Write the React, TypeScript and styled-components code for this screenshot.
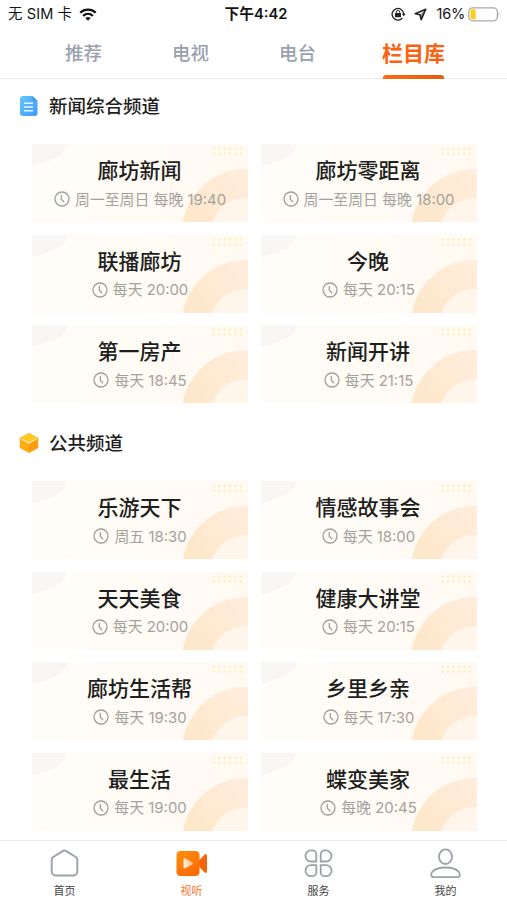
import React from 'react';
import styled, { createGlobalStyle } from 'styled-components';

const GlobalStyle = createGlobalStyle`
  * { box-sizing: border-box; }
  body {
    margin: 0;
    background: #fff;
    color: #1e1e20;
    font-family: Inter, "Noto Sans CJK SC", sans-serif;
  }
`;

const Screen = styled.div`
  width: 507px;
  height: 900px;
  display: flex;
  flex-direction: column;
  overflow: hidden;
  background: #fff;
`;

const StatusBar = styled.header`
  height: 28px;
  flex: none;
  display: grid;
  grid-template-columns: 1fr auto 1fr;
  align-items: center;
  padding: 0 6px 0 8px;
  font-size: 14.5px;
  line-height: 28px;
  white-space: nowrap;
  color: #141414;
`;

const StatusGroup = styled.div<{ $end?: boolean }>`
  display: flex;
  align-items: center;
  justify-content: ${p => (p.$end ? 'flex-end' : 'flex-start')};
  height: 28px;
`;

const Carrier = styled.span`
  margin-right: 7px;
  letter-spacing: 0.1px;
`;

const Clock = styled.span`
  padding-left: 3px;
  font-weight: 600;
  font-size: 14.7px;
`;

const Percent = styled.span`
  margin: 0 3px 0 9px;
  letter-spacing: -0.2px;
`;

const Tabs = styled.nav`
  height: 51px;
  flex: none;
  display: grid;
  grid-template-columns: 107px 107px 107px 125px;
  padding-left: 30px;
  border-bottom: 1px solid #e9e9ea;
`;

const Tab = styled.div<{ $active?: boolean }>`
  display: flex;
  flex-direction: column;
  align-items: center;
  justify-content: space-between;
  height: 51px;
  font-size: ${p => (p.$active ? 21 : 18.5)}px;
  font-weight: ${p => (p.$active ? 700 : 500)};
  line-height: 47px;
  color: ${p => (p.$active ? '#fb620f' : '#9aa1ae')};
`;

const TabText = styled.span`
  height: 47px;
  padding-top: 2px;
`;

const Underline = styled.i`
  width: 61px;
  height: 4px;
  border-radius: 3px 3px 0 0;
  background: linear-gradient(90deg, #fb6a14, #e85c10);
`;

const Content = styled.main`
  flex: 1;
  min-height: 0;
  overflow: hidden;
`;

const Section = styled.section`
  height: 337px;
`;

const SectionTitle = styled.h2`
  display: flex;
  align-items: center;
  gap: 10px;
  height: 54px;
  margin: 0 0 11px;
  padding-left: 19px;
  font-size: 18.5px;
  font-weight: 500;
  line-height: 54px;
`;

const Cards = styled.div`
  display: grid;
  grid-template-columns: 216px 216px;
  grid-auto-rows: 78px;
  gap: 12.5px;
  padding-left: 32px;
`;

const Card = styled.article`
  position: relative;
  display: flex;
  flex-direction: column;
  align-items: center;
  padding: 11px 1px 0 0;
  background: linear-gradient(100deg, #fffdf9, #fffbf4 65%, #fff9f1);
  overflow: hidden;
`;

const Decoration = styled.svg`
  position: absolute;
  inset: 0;
`;

const CardTitle = styled.h3`
  position: relative;
  margin: 0;
  font-size: 21px;
  font-weight: 500;
  line-height: 31px;
`;

const Schedule = styled.div`
  position: relative;
  display: flex;
  align-items: center;
  gap: 5px;
  height: 27px;
  padding-left: 1px;
  font-size: 14.9px;
  line-height: 28px;
  color: #a4a19d;
  white-space: nowrap;
  svg { margin-bottom: 1px; }
`;

const BottomBar = styled.nav`
  height: 60px;
  flex: none;
  display: grid;
  grid-template-columns: repeat(4, 127px);
  padding-left: 1px;
  border-top: 1px solid #ebebec;
  background: #fff;
`;

const BottomItem = styled.div<{ $active?: boolean }>`
  display: flex;
  flex-direction: column;
  align-items: center;
  padding-top: 7px;
  font-size: 11px;
  line-height: 16px;
  color: ${p => (p.$active ? '#f5732d' : '#444')};
  svg { margin-bottom: 4px; }
`;

const CardArt = () => (
  <Decoration width="217" height="78" viewBox="0 0 217 78">
    <path d="M0 0H36C32 12 22 15 14 18C9 20 5 21 0 22Z" fill="#f8f7f5" />
    <circle cx="214" cy="89" r="35" fill="#fff5eb" />
    <circle cx="214" cy="89" r="49.5" fill="none" stroke="url(#ringFill)" strokeWidth="29" />
    {[4.7, 9.7].map(y =>
      [0, 1, 2, 3, 4, 5].map(i => (
        <circle key={`${y}-${i}`} cx={181.8 + i * 5.4} cy={y} r="1.15" fill="#fbeeb0" />
      )),
    )}
  </Decoration>
);

const SharedGradients = styled.svg`
  position: absolute;
  width: 0;
  height: 0;
`;

const ClockIcon = () => (
  <svg width="16" height="16" viewBox="0 0 16 16" fill="none" stroke="#a09f9d" strokeWidth="1.3" strokeLinecap="round">
    <circle cx="8" cy="8" r="7" />
    <path d="M7.3 4.3V8.2L9.7 10.8" />
  </svg>
);

const WifiIcon = () => (
  <svg width="18" height="13" viewBox="0 0 18 13" fill="none" stroke="#111" strokeWidth="2.3">
    <path d="M1.2 4.7C5.5.5 12.5.5 16.8 4.7" />
    <path d="M4.2 7.8C7 5.2 11 5.2 13.8 7.8" />
    <path d="M9 12.7L6.3 10Q9 7.8 11.7 10Z" fill="#111" stroke="none" />
  </svg>
);

const LockIcon = () => (
  <svg width="15" height="14" viewBox="0 0 15 14" fill="none" stroke="#222" strokeWidth="1.3">
    <path d="M11.5 10.8A5.8 5.8 0 1 1 12.7 7" />
    <path d="M10.7 6.7H14.7L12.7 9.2Z" fill="#222" stroke="none" />
    <rect x="4" y="6.1" width="6" height="4.2" rx=".6" fill="#222" stroke="none" />
    <path d="M5.2 6.5V5.3a1.8 1.8 0 0 1 3.6 0v1.2" strokeWidth="1" />
  </svg>
);

const LocationMark = styled.svg`
  margin-left: 8px;
`;

const LocationIcon = () => (
  <LocationMark width="13" height="13" viewBox="0 0 13 13" fill="none" stroke="#222" strokeWidth="1.6" strokeLinejoin="round">
    <path d="M11.7 1.2L1.2 5.8L6 6.8L7.2 11.8Z" />
    <path d="M11.7 1.2L6 6.8L7.2 11.8Z" fill="#222" fillOpacity=".5" stroke="none" />
  </LocationMark>
);

const BatteryIcon = () => (
  <svg width="33" height="15" viewBox="0 0 33 15">
    <rect x=".8" y=".8" width="28.6" height="13" rx="4" fill="#fff" stroke="#a9a9a9" strokeWidth="1.2" />
    <path d="M4.5 2.3H7.6V12.3H4.5a2 2 0 0 1-2-2V4.3a2 2 0 0 1 2-2Z" fill="#fdce12" />
    <path d="M30.7 5.1Q32.5 7.3 30.7 9.5Z" fill="#9c9c9c" />
  </svg>
);

const DocumentIcon = () => (
  <svg width="20" height="20" viewBox="0 0 20 20">
    <defs>
      <linearGradient id="docFill" x1="0" y1="0" x2="1" y2="1">
        <stop stopColor="#65c8fb" />
        <stop offset="1" stopColor="#4198f8" />
      </linearGradient>
    </defs>
    <path d="M4 0H13.5L18.5 5V17a3 3 0 0 1-3 3H4a3 3 0 0 1-3-3V3a3 3 0 0 1 3-3Z" fill="url(#docFill)" />
    <path d="M13.5 0L18.5 5H15a1.5 1.5 0 0 1-1.5-1.5Z" fill="#3c9af0" />
    <path d="M5 7.2H14M5 11H14M5 14.8H14" stroke="#e3f5ff" strokeWidth="1.4" />
  </svg>
);

const CubeIcon = () => (
  <svg width="20" height="20" viewBox="0 0 20 20">
    <path d="M10 .5L18.8 5.2V14.7L10 19.5L1.2 14.7V5.2Z" fill="#ffac13" stroke="#ffac13" strokeLinejoin="round" />
    <path d="M10 .5L18.8 5.2L10 10L1.2 5.2Z" fill="#ffc91d" />
    <path d="M10 10L18.8 5.2V14.7L10 19.5Z" fill="#ff9b0d" />
    <path d="M2.5 6L10 10L17.5 6" fill="none" stroke="#fff0bd" strokeWidth="1.4" />
  </svg>
);

const HomeIcon = () => (
  <svg width="31" height="31" viewBox="0 0 31 31" fill="none" stroke="#9da1ac" strokeWidth="1.9" strokeLinejoin="round">
    <path d="M14.1 2.9Q15.5 2 16.9 2.9L26.8 9Q28.3 10 28.3 12V23.5a4 4 0 0 1-4 4H6.7a4 4 0 0 1-4-4V12Q2.7 10 4.2 9Z" />
  </svg>
);

const VideoIcon = () => (
  <svg width="33" height="31" viewBox="0 0 33 31">
    <defs>
      <linearGradient id="videoFill" x1="0" y1="0" x2=".6" y2="1">
        <stop stopColor="#ff9208" />
        <stop offset="1" stopColor="#fc6a06" />
      </linearGradient>
      <linearGradient id="playFill">
        <stop stopColor="#fff0df" />
        <stop offset="1" stopColor="#ffc08a" />
      </linearGradient>
    </defs>
    <path d="M23.5 13L29.2 7Q32 4.6 32 8V23Q32 26.4 29.2 24L23.5 18Z" fill="#f7630b" />
    <rect x="1.5" y="3" width="23" height="25" rx="4" fill="url(#videoFill)" />
    <path d="M8.5 11.5Q8.5 9.8 10.3 10.6L17.3 14.4Q18.8 15.5 17.3 16.6L10.3 20.2Q8.5 20.8 8.5 19.3Z" fill="url(#playFill)" />
  </svg>
);

const ServiceIcon = () => (
  <svg width="31" height="31" viewBox="0 0 31 31" fill="none" stroke="#9da1a8" strokeWidth="1.8">
    <path d="M8 2.4H9.3a4 4 0 0 1 4 4V13.5H8A5.5 5.5 0 0 1 8 2.4Z" />
    <path d="M23 2.4H21.7a4 4 0 0 0-4 4V13.5H23A5.5 5.5 0 0 0 23 2.4Z" />
    <path d="M8 28.2H9.3a4 4 0 0 0 4-4V17.1H8A5.5 5.5 0 0 0 8 28.2Z" />
    <path d="M23 28.2H21.7a4 4 0 0 1-4-4V17.1H23A5.5 5.5 0 0 1 23 28.2Z" />
  </svg>
);

const UserIcon = () => (
  <svg width="31" height="31" viewBox="0 0 31 31" fill="none" stroke="#9da1a8" strokeWidth="1.8">
    <ellipse cx="15.5" cy="8.7" rx="6.5" ry="7.3" />
    <path d="M4 29.2C.8 29.2.5 26 2.3 23.8C4.9 20.8 10 19.5 15.5 19.5S26.1 20.8 28.7 23.8C30.5 26 30.2 29.2 27 29.2Z" />
  </svg>
);

const channels = [
  {
    name: '新闻综合频道',
    icon: <DocumentIcon />,
    shows: [
      ['廊坊新闻', '周一至周日 每晚 19:40'],
      ['廊坊零距离', '周一至周日 每晚 18:00'],
      ['联播廊坊', '每天 20:00'],
      ['今晚', '每天 20:15'],
      ['第一房产', '每天 18:45'],
      ['新闻开讲', '每天 21:15'],
    ],
  },
  {
    name: '公共频道',
    icon: <CubeIcon />,
    shows: [
      ['乐游天下', '周五 18:30'],
      ['情感故事会', '每天 18:00'],
      ['天天美食', '每天 20:00'],
      ['健康大讲堂', '每天 20:15'],
      ['廊坊生活帮', '每天 19:30'],
      ['乡里乡亲', '每天 17:30'],
      ['最生活', '每天 19:00'],
      ['蝶变美家', '每晚 20:45'],
    ],
  },
];

export default function App() {
  return (
    <>
      <GlobalStyle />
      <Screen>
        <SharedGradients aria-hidden="true">
          <defs>
            <linearGradient id="ringFill" gradientUnits="userSpaceOnUse" x1="150" y1="78" x2="217" y2="25">
              <stop stopColor="#fee7c8" />
              <stop offset="1" stopColor="#ffeddd" />
            </linearGradient>
          </defs>
        </SharedGradients>
        <StatusBar>
          <StatusGroup>
            <Carrier>无 SIM 卡</Carrier>
            <WifiIcon />
          </StatusGroup>
          <Clock>下午4:42</Clock>
          <StatusGroup $end>
            <LockIcon />
            <LocationIcon />
            <Percent>16%</Percent>
            <BatteryIcon />
          </StatusGroup>
        </StatusBar>
        <Tabs>
          {['推荐', '电视', '电台'].map(t => (
            <Tab key={t}><TabText>{t}</TabText></Tab>
          ))}
          <Tab $active>
            <TabText>栏目库</TabText>
            <Underline />
          </Tab>
        </Tabs>
        <Content>
          {channels.map(channel => (
            <Section key={channel.name}>
              <SectionTitle>{channel.icon}{channel.name}</SectionTitle>
              <Cards>
                {channel.shows.map(([title, time]) => (
                  <Card key={title}>
                    <CardArt />
                    <CardTitle>{title}</CardTitle>
                    <Schedule><ClockIcon />{time}</Schedule>
                  </Card>
                ))}
              </Cards>
            </Section>
          ))}
        </Content>
        <BottomBar>
          <BottomItem><HomeIcon />首页</BottomItem>
          <BottomItem $active><VideoIcon />视听</BottomItem>
          <BottomItem><ServiceIcon />服务</BottomItem>
          <BottomItem><UserIcon />我的</BottomItem>
        </BottomBar>
      </Screen>
    </>
  );
}
